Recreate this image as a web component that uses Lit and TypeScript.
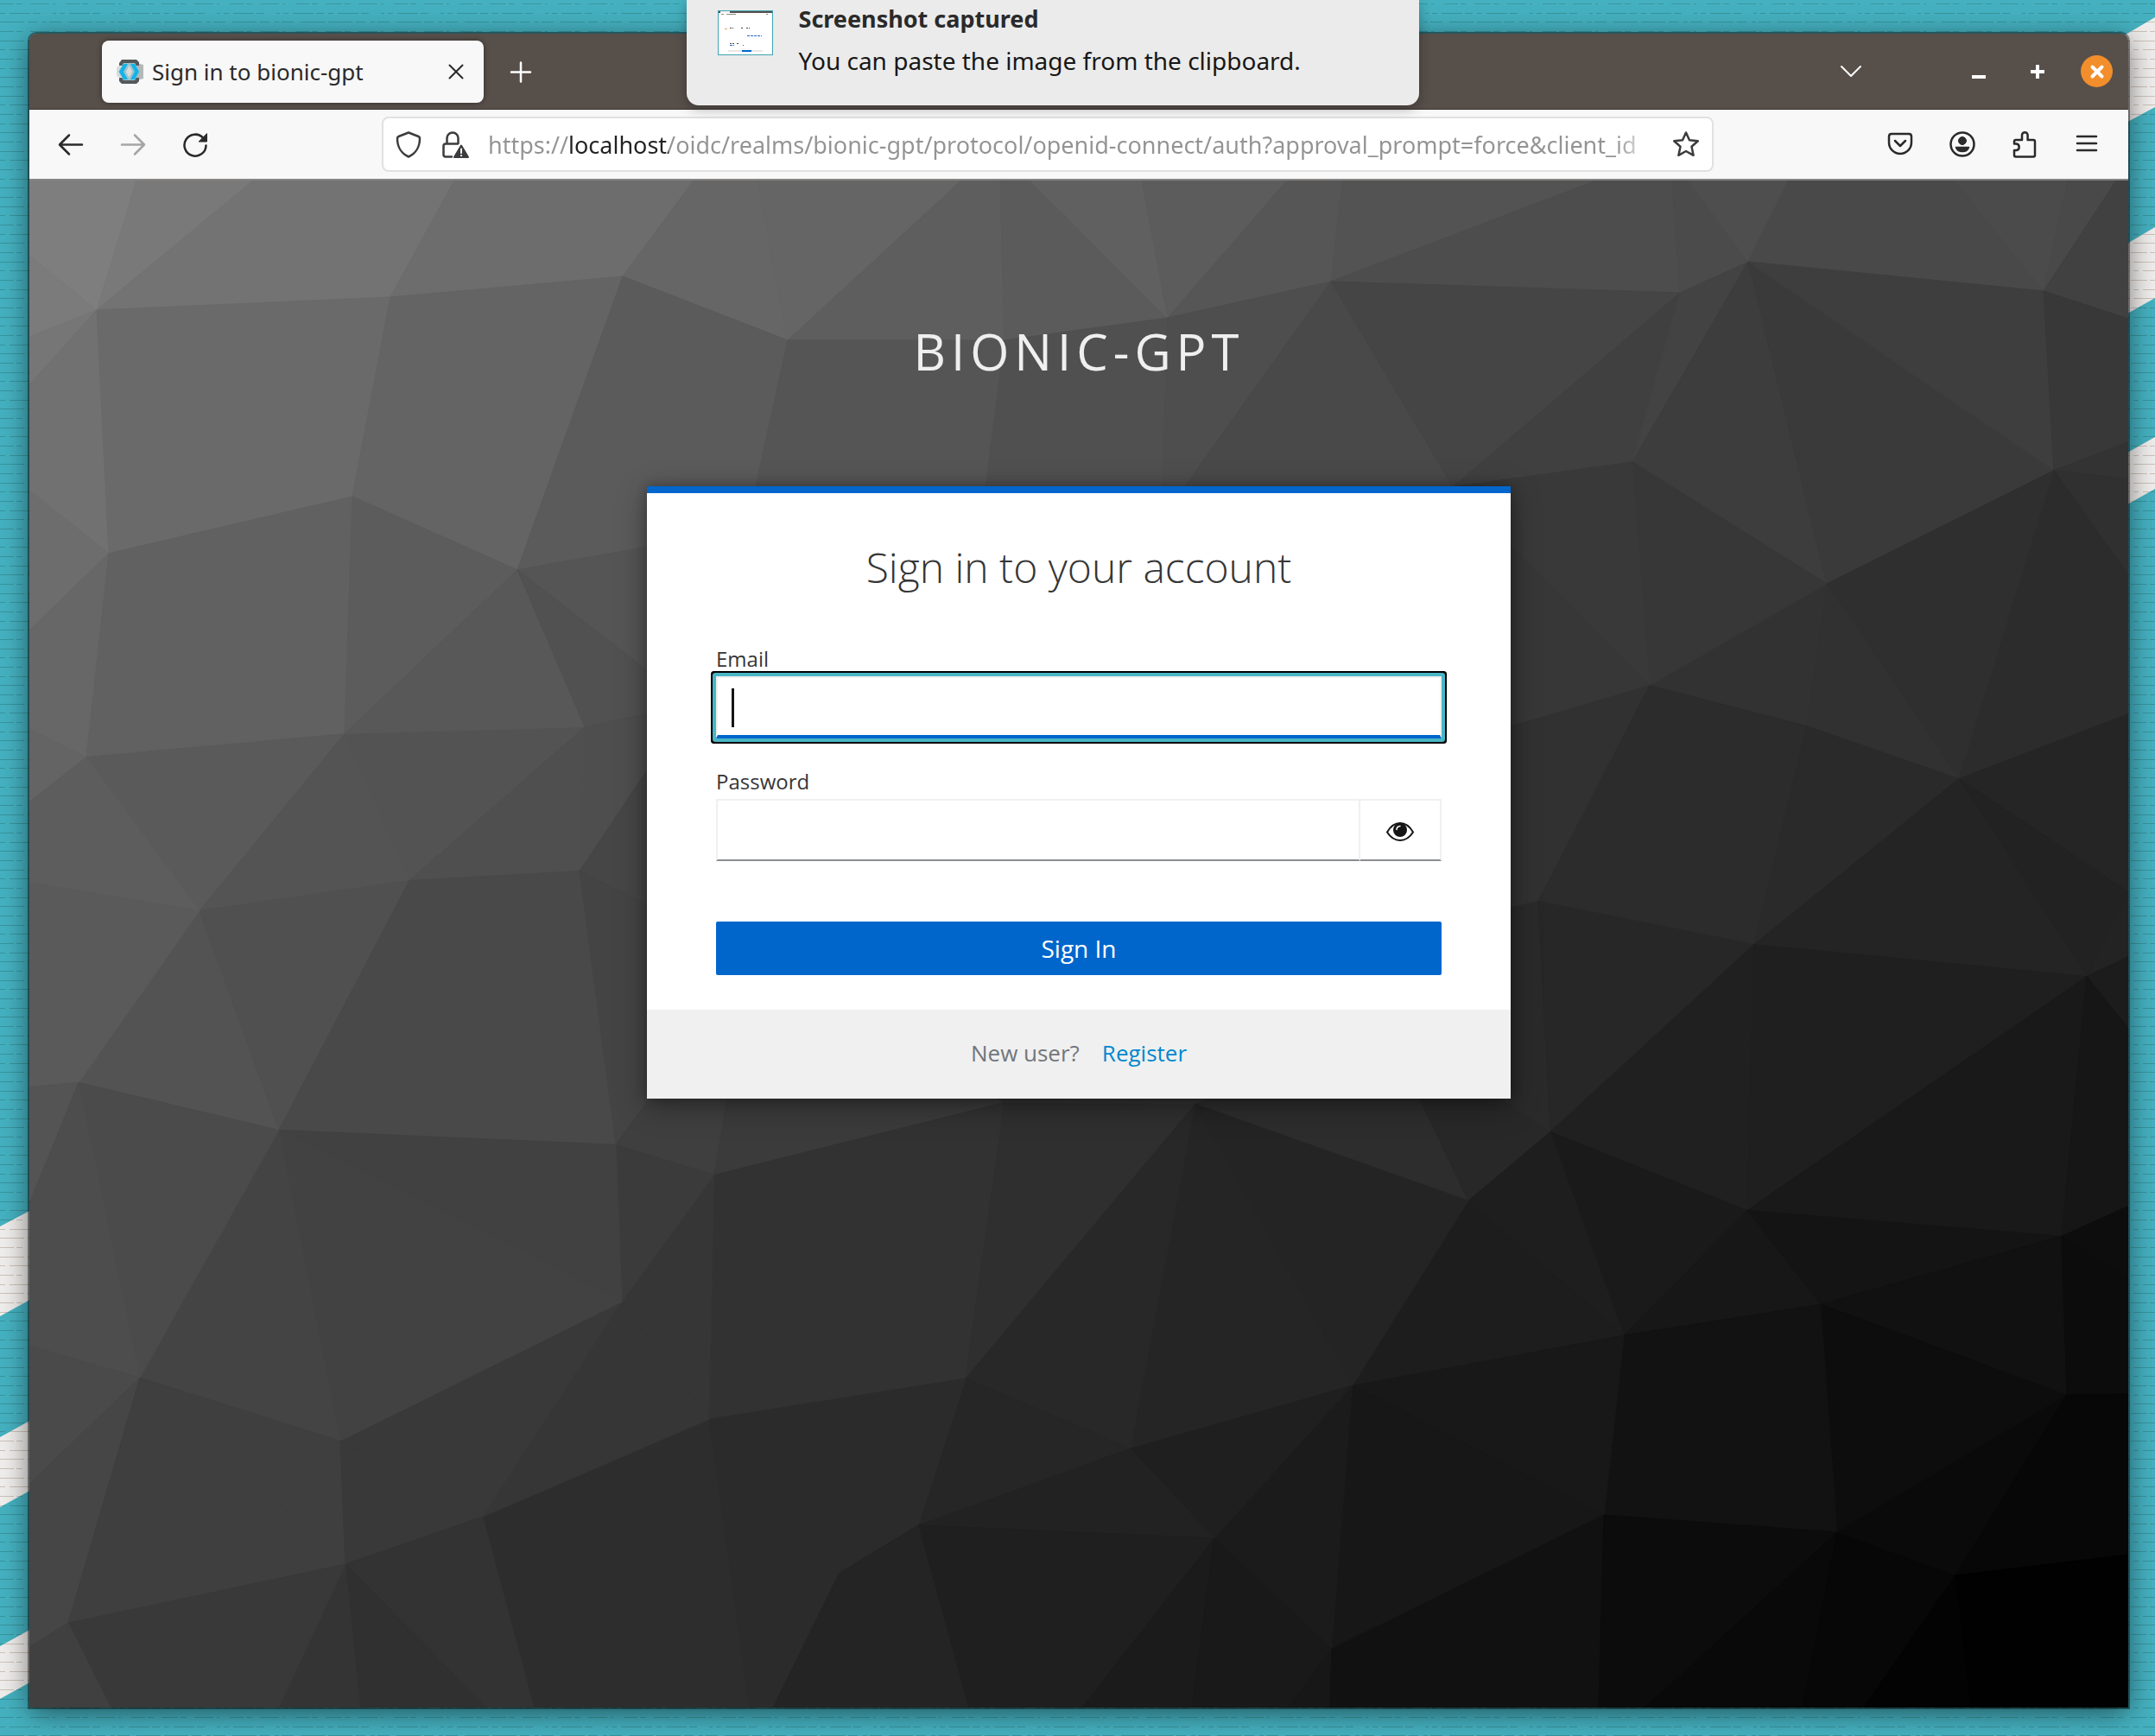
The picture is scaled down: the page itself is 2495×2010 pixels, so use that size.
import { LitElement, html, svg, css } from "lit";
import { customElement } from "lit/decorators.js";

type Point = [number, number];

/* Inner corners of the low-poly backdrop. */
const V: Record<string, Point> = {
  A: [112, 358], B: [452, 343], C: [721, 319], D: [912, 393], E: [1163, 393],
  F: [408, 574], G: [599, 659], H: [126, 640], I: [399, 849], J: [100, 876],
  K: [677, 841], L: [231, 1054], M: [474, 1019], N: [671, 1008],
  O: [1352, 367], P: [1541, 325], Q: [1945, 338], R: [2024, 302], S: [2366, 336],
  T: [1682, 563], U: [1890, 534], V: [2378, 544], W: [2115, 675], X: [1910, 793],
  Y: [2092, 840], Z: [2268, 901],
  AA: [1781, 1043], AB: [2031, 1093], AC: [2416, 1130], AD: [91, 1253],
  AE: [323, 1308], AF: [713, 1325], AG: [827, 1360], AH: [162, 1595],
  AI: [394, 1668], AJ: [720, 1507], AK: [821, 1643], AL: [1118, 1596],
  AM: [400, 1811], AN: [559, 1756], AO: [79, 1879], AP: [1063, 1766],
  AQ: [972, 1821], AR: [1384, 1278], AS: [1700, 1390], AT: [1795, 1310],
  AU: [2023, 1401], AV: [2387, 1431], AW: [1880, 1546], AX: [2108, 1510],
  AY: [1566, 1604], AZ: [1309, 1677], BA: [2393, 1615], BB: [1857, 1754],
  BC: [2127, 1774], BD: [1406, 1781], BE: [1542, 1909], BF: [2264, 1824],
  BG: [1163, 1276],
  C1: [864, 612], C2: [1130, 650], C3: [1345, 600], C4: [1700, 855],
  C5: [1700, 1062], C6: [800, 815], C7: [870, 1110], C8: [1600, 1180],
};

/* Each face: gray level, then corners. t/b/l/r + number is a point on that edge. */
const FACES = `
7e l208 t158 A l295|7b l295 A l389|76 l389 A l445|71 l445 A H l567|79 t158 t293 A
73 t293 t526 B A|6d t526 t803 C B|66 t803 t877 D C|65 t877 t1113 D|5e t1113 t1158 E D
5b t1158 t1193 O E|60 t1193 t1322 O|5c t1322 t1490 O|56 t1490 t1554 P O|53 t1554 t1848 P
4d t1848 t1936 Q P|4b t1936 t1954 R Q|4e t1954 t2071 R|49 t2071 t2263 S R|4b t2263 t2394 S
49 t2394 t2450 S|41 t2450 r208 r368 S|6a A B F H|64 B C G F|6d l567 H l729
67 l729 H J l843|64 l843 J l928|61 H F I J|5c F G I|5b C D C1 G|55 D E C2 C1
50 E O C3 C2|4e O P C3|49 P T C3|45 P Q T|40 Q U T|43 Q R U|3d R W U|3a R V W|3e R S V
38 S r368 r511 V|33 V r511 r554|30 V r554 r665|2c V r665 r826 Z|2f V Z W|31 W Z Y
32 W Y X|37 U W X|39 T U X|37 T X C4|31 X AA C5 C4|2c X Y AB AA|2a Y Z AB
25 Z r826 r1032|22 Z r1032 AC|24 Z AC AB|23 r1032 r1107 AC|5a J I L|5d l928 J L l1021
53 I K M|54 I M L|58 G K I|55 G C1 C6|51 G C6 K|4e K C6 N|4f K M N|46 N C6 C7
53 L AD AE|50 L M AE|5a l1021 L AD l1258|49 M N AF AE|44 N C7 AF|3f AF C7 AG
3b AG C7 BG|32 AG BG AL AK|2f BG AR AL|33 BG C7 C8 AR|2d AR C8 AS|28 AS C8 AT
2a AA C5 C8 AT|27 AA AB AT|20 AB AU AT|1f AB AC AU|19 AC AV AU|1c AC r1107 r1190
16 AC r1190 r1396 AV|1a AT AU AW|1e AS AT AW|1d AS AW AY|24 AR AS AY|25 AR AY AZ
28 AR AZ AL|17 AU AX AW|14 AU AV AX|11 AV BA AX|0d AV r1396 r1480|0c AV r1480 r1614 BA
0d AX BA BC|12 AW AX BC BB|18 AY AW BB|17 AY BB BE|1b AY BE BD|1f AY BD AZ|26 AL AZ AP
22 AP AZ BD|1f AP BD b1253 b1121|2b AK AL AP AQ b895 b867|24 AP AQ b895 b1121
2d AN AK b867 b618|36 AJ AK AN|39 AJ AN AI|36 AG AK AJ|3b AF AG AJ|41 AE AF AJ
42 AE AJ AI|44 AE AI AH|4b AD AE AH|54 l1258 AD l1393|4d AD AH l1558 l1393
4a AH l1558 l1718|46 l1718 AH AO l1907|3f AH AI AM|3f AH AM AO|39 AI AN AM
33 AM AN b618 b563|30 AM b563 b417|34 AM b417 b323|39 AO AM b323 b128|40 AO b128 l1977 l1907
1b BD b1253 b1380|19 BD BE b1492 b1380|17 BE b1492 b1540|11 BE BB b1851 b1540
0c BB BC b1905 b1851|09 BC b2087 b1905|07 BC BF b2158 b2087|0a BC BA BF
07 BA BF r1800 r1614|01 BF r1800 r1977 b2281|03 BF b2281 b2158`
  .trim()
  .split(/[|\n]/)
  .map((line) => {
    const [gray, ...names] = line.trim().split(" ");
    return { fill: `#${gray}${gray}${gray}`, points: names.map(corner).join(" ") };
  });

function corner(name: string): string {
  if (V[name]) return V[name].join(",");
  const n = Number(name.slice(1));
  switch (name[0]) {
    case "t": return `${n},208`;
    case "b": return `${n},1977`;
    case "l": return `34,${n}`;
    default: return `2464,${n}`;
  }
}

const polyBackdrop = html`
  <svg class="backdrop" viewBox="34 208 2430 1769" preserveAspectRatio="none" aria-hidden="true">
    ${FACES.map((f) => svg`<polygon points=${f.points} fill=${f.fill} stroke=${f.fill} stroke-width="1"></polygon>`)}
  </svg>`;

const wallpaper = html`
  <svg class="wallpaper" viewBox="0 0 2495 2010" preserveAspectRatio="none" aria-hidden="true">
    <defs>
      <pattern id="grain" width="190" height="64" patternUnits="userSpaceOnUse">
        <g fill="none" stroke="#2d7d80" stroke-opacity=".55">
          <path stroke-dasharray="16 3 7 9 22 4 3 12" d="M0 4.500H190M0 36.500H190" />
          <path stroke-dasharray="6 5 24 3 9 14 4 4" d="M0 15.500H190M0 57.500H190" />
          <path stroke-dasharray="28 4 11 6 5 3 14 8" d="M0 25.500H190M0 47.500H190" />
        </g>
      </pattern>
      <pattern id="grain-light" width="190" height="64" patternUnits="userSpaceOnUse">
        <g fill="none" stroke="#b3a596" stroke-opacity=".6">
          <path stroke-dasharray="16 3 7 9 22 4 3 12" d="M0 4.500H190M0 36.500H190" />
          <path stroke-dasharray="6 5 24 3 9 14 4 4" d="M0 15.500H190M0 57.500H190" />
          <path stroke-dasharray="28 4 11 6 5 3 14 8" d="M0 25.500H190M0 47.500H190" />
        </g>
      </pattern>
      <path id="stripes" d="M0 1420L40 1399V1502L0 1524ZM0 1664L40 1642V1723L0 1745ZM0 1906L40 1884V1945L0 1967ZM2456 43L2495 20V124L2456 145ZM2456 286L2495 263V345L2456 367ZM2456 528L2495 506V566L2456 588Z" />
    </defs>
    <rect width="2495" height="2010" fill="#45b1c0" />
    <rect width="2495" height="2010" fill="url(#grain)" />
    <use href="#stripes" fill="#f0eeec" />
    <use href="#stripes" fill="url(#grain-light)" />
  </svg>`;

const icon = (body: unknown, size = 32) => html`
  <svg class="icon" width=${size} height=${size} viewBox="0 0 32 32" fill="none" stroke="currentColor"
    stroke-width="2.500" stroke-linecap="round" stroke-linejoin="round" aria-hidden="true">${body}</svg>`;

const icons = {
  back: icon(svg`<path d="M29 16.500H3M14 5.500L3 16.500L14 27.500" />`),
  forward: icon(svg`<path d="M3 16.500H29M18 5.500L29 16.500L18 27.500" />`),
  reload: icon(svg`<path d="M28.500 17.500A12.500 12.500 0 1 1 25.500 9" /><path d="M29.500 4V13H20.500Z" fill="currentColor" stroke-width="1" />`),
  shield: icon(svg`<path d="M16 2.500L27.500 7Q29 7.600 29 9.500C29 18 25 26.500 16 30.500C7 26.500 3 18 3 9.500Q3 7.600 4.500 7Z" />`),
  lock: icon(svg`<path d="M12 30.500H5Q2.500 30.500 2.500 28V18Q2.500 15.500 5 15.500H19M6.500 15V9A6.500 6.500 0 0 1 19.500 9V15" />
    <path d="M23 17.500L31 31H15Z" fill="currentColor" stroke-width="2" /><path d="M23 21.500V26M23 29V29.200" stroke="#fff" stroke-width="2" />`),
  star: icon(svg`<path d="M16 2.500L20 11.300L29.800 12.300L22.500 18.800L24.600 28.800L16 24L7.400 28.800L9.500 18.800L2.200 12.300L12 11.300Z" />`),
  pocket: icon(svg`<path d="M6 4H26Q29 4 29 7V14A13 13 0 0 1 3 14V7Q3 4 6 4Z" /><path d="M10 12L16 18L22 12" />`),
  account: icon(svg`<circle cx="16" cy="16" r="13.500" /><circle cx="16" cy="12" r="4.500" fill="currentColor" stroke-width="1" />
    <path d="M8.500 19.500H23.500C22.500 23 19.500 24.500 16 24.500S9.500 23 8.500 19.500Z" fill="currentColor" stroke-width="1.500" />`),
  extension: icon(svg`<path d="M6 30.500Q4 30.500 4 28.500V23H6.500A3.800 3.800 0 0 0 6.500 15.500H4V13Q4 11 6 11H13V5.500A3.300 3.300 0 0 1 19.600 5.500V11H26Q28 11 28 13V28.500Q28 30.500 26 30.500Z" />`),
  menu: icon(svg`<path d="M5 7H27M5 15H27M5 23H27" />`),
  chevron: icon(svg`<path d="M5 10L16 21L27 10" stroke-width="2" />`),
  minimise: icon(svg`<path d="M8 22H24" stroke-width="4" stroke-linecap="butt" />`),
  maximise: icon(svg`<path d="M8 16H24M16 8V24" stroke-width="4" stroke-linecap="butt" />`),
  closeWindow: icon(svg`<path d="M10.500 10.500L21.500 21.500M21.500 10.500L10.500 21.500" stroke-width="4" />`),
  closeTab: icon(svg`<path d="M8.500 8.500L23.500 23.500M23.500 8.500L8.500 23.500" stroke-width="2" />`),
  newTab: icon(svg`<path d="M5 16.500H27M16 5.500V27.500" stroke-width="2.500" />`),
  favicon: html`<svg class="icon" width="32" height="30" viewBox="0 0 32 30" aria-hidden="true">
    <path d="M1 10L6 7V23L1 20Z" fill="#d9dbdd" />
    <path d="M24 5L32 7V23L24 25Z" fill="#b5b7b9" />
    <path d="M7 1H24L27 4V8H4V5ZM4 22H27V26L24 29H7L4 26Z" fill="#55585b" />
    <path d="M9 5H22L28 15L22 25H9L3 15Z" fill="#9fc4cf" />
    <path d="M9 6H14L9 15L14 24H9L4 15ZM22 6H17L22 15L17 24H22L27 15Z" fill="#12b4e8" />
    <path d="M15.500 8L19 15L15.500 22L12 15Z" fill="#dedad6" /></svg>`,
  eye: html`<svg class="icon" width="32" height="22" viewBox="0 0 32 22" aria-hidden="true">
    <path d="M1 11.500Q7 1 16 1T31 11.500Q25 21 16 21T1 11.500Z" fill="#fff" stroke="#151515" stroke-width="2" />
    <circle cx="16" cy="9" r="8" fill="#151515" />
    <path d="M12 8.500Q12.200 4.800 16 4.500" fill="none" stroke="#fff" stroke-width="1.500" stroke-linecap="round" /></svg>`,
};

const thumbnail = html`
  <svg class="thumb" width="64" height="52" viewBox="0 0 64 52" aria-hidden="true">
    <rect width="64" height="52" fill="#3fa3b1" />
    <rect x="1" y="1" width="62" height="50" fill="#fff" />
    <rect x="1" y="1" width="62" height="2" fill="#574f4a" />
    <rect x="3" y="1" width="11" height="2" fill="#f3f3f3" />
    <path d="M4 4.500H7M10 4.500H21M56 4.500H58" stroke="#8a8a8a" />
    <path d="M8 21.500H11" stroke="#f0a050" />
    <path d="M14 20.500H18M27 20.500H29M33 20.500H37M14 38.500H20M22 38.500H25" stroke="#444" stroke-dasharray="2 1" />
    <path d="M34 29.500H51M14 40.500H19M29 40.500H30" stroke="#2467c8" stroke-dasharray="3 1" />
    <rect x="12" y="46" width="40" height="2" fill="#e6e6ea" />
    <rect x="28" y="46" width="11" height="2" fill="#06c" />
  </svg>`;

@customElement("browser-chrome")
class BrowserChrome extends LitElement {
  static styles = css`
    :host { display: block; font-family: "Noto Sans", "Open Sans", sans-serif; color: #2b2a2b; }
    button { border: 0; padding: 0; margin: 0; background: none; color: inherit; font: inherit; cursor: pointer;
      display: inline-flex; align-items: center; justify-content: center; }
    .icon { display: block; flex: none; }
    .titlebar { display: flex; align-items: center; height: 88px; box-sizing: border-box; padding: 0 18px 0 84px;
      background: #574f4a; border-bottom: 1px solid #37302d; border-radius: 8px 8px 0 0; color: #fff; }
    .tab { display: flex; align-items: center; gap: 10px; width: 442px; height: 72px; box-sizing: border-box;
      padding: 0 16px; border-radius: 8px; background: #f8f8f8; color: #2b2a2b; box-shadow: 0 0 6px rgba(0, 0, 0, .45); }
    .tab-title { flex: 1; font-size: 26px; line-height: 36px; white-space: nowrap; }
    .new-tab { width: 64px; height: 64px; margin-left: 11px; }
    .window-controls { display: flex; align-items: center; margin-left: auto; }
    .list-tabs { width: 64px; height: 64px; margin-right: 82px; }
    .window-button { width: 68px; height: 64px; }
    .window-close { width: 37px; height: 37px; margin-left: 16px; border-radius: 50%; background: #f28e2b; }
    .toolbar { display: flex; align-items: center; height: 82px; box-sizing: border-box; padding: 0 12px;
      background: #f8f8f8; border-bottom: 2px solid #878583; }
    .group { display: flex; }
    .tool { width: 72px; height: 64px; }
    .tool:disabled { color: #a6a5a6; cursor: default; }
    .space { flex: 1 1 0; max-width: 180px; }
    .urlbar { display: flex; align-items: center; flex: 1 1 1180px; height: 64px; box-sizing: border-box; padding: 0 14px 0 13px;
      gap: 22px; background: #fff; border: 2px solid #e1e1e1; border-radius: 8px; color: #3c3b3d; }
    .address { flex: 1; min-width: 0; height: 56px; box-sizing: border-box; border: 0; padding: 0; margin: 0;
      outline: 0; font: 27px/36px "Noto Sans", "Open Sans", sans-serif; color: transparent; -webkit-text-fill-color: transparent;
      background: linear-gradient(90deg, #949394 0 95px, #232223 95px 209px, #949394 209px calc(100% - 52px), transparent calc(100% - 8px));
      -webkit-background-clip: text; background-clip: text; }
    .bookmark { margin-left: -8px; }
  `;
  render() {
    return html`
      <header class="titlebar">
        <div class="tab">
          ${icons.favicon}
          <span class="tab-title">Sign in to bionic-gpt</span>
          <button type="button" aria-label="Close tab">${icons.closeTab}</button>
        </div>
        <button class="new-tab" type="button" aria-label="New tab">${icons.newTab}</button>
        <div class="window-controls">
          <button class="list-tabs" type="button" aria-label="List all tabs">${icons.chevron}</button>
          <button class="window-button" type="button" aria-label="Minimise">${icons.minimise}</button>
          <button class="window-button" type="button" aria-label="Maximise">${icons.maximise}</button>
          <button class="window-close" type="button" aria-label="Close window">${icons.closeWindow}</button>
        </div>
      </header>
      <nav class="toolbar">
        <div class="group">
          <button class="tool" type="button" aria-label="Back">${icons.back}</button>
          <button class="tool" type="button" aria-label="Forward" disabled>${icons.forward}</button>
          <button class="tool" type="button" aria-label="Reload">${icons.reload}</button>
        </div>
        <div class="space"></div>
        <div class="urlbar">
          <button type="button" aria-label="Tracking protection">${icons.shield}</button>
          <button type="button" aria-label="Connection not secure">${icons.lock}</button>
          <input class="address" type="text" aria-label="Address" spellcheck="false"
            value="https://localhost/oidc/realms/bionic-gpt/protocol/openid-connect/auth?approval_prompt=force&client_id" />
          <button class="bookmark" type="button" aria-label="Bookmark this page">${icons.star}</button>
        </div>
        <div class="space"></div>
        <div class="group">
          <button class="tool" type="button" aria-label="Save to Pocket">${icons.pocket}</button>
          <button class="tool" type="button" aria-label="Account">${icons.account}</button>
          <button class="tool" type="button" aria-label="Extensions">${icons.extension}</button>
          <button class="tool" type="button" aria-label="Menu">${icons.menu}</button>
        </div>
      </nav>`;
  }
}

@customElement("login-page")
class LoginPage extends LitElement {
  static styles = css`
    :host { position: relative; display: flex; flex-direction: column; align-items: center; flex: 1; overflow: hidden;
      font-family: "Open Sans", sans-serif; color: #363636; background: #333; }
    .backdrop { position: absolute; inset: 0; width: 100%; height: 100%; }
    .realm { position: relative; margin: 154px 0 0; font-size: 58px; line-height: 88px; font-weight: 400;
      letter-spacing: 6px; color: #efefef; text-transform: uppercase; }
    .card { position: relative; width: min(1000px, 100%); margin: 112px 0 40px; background: #fff; border-top: 8px solid #06c;
      box-sizing: border-box; box-shadow: 0 8px 32px rgba(3, 3, 3, .36), 0 0 12px rgba(3, 3, 3, .24); }
    .form { padding: 46px 80px 40px; }
    .heading { margin: 0 0 48px; text-align: center; font-size: 48px; line-height: 80px; font-weight: 300; }
    .label { display: block; margin-bottom: 2px; font-size: 24px; line-height: 36px; }
    .field { position: relative; display: flex; margin-bottom: 32px; }
    .text { flex: 1; min-width: 0; height: 72px; box-sizing: border-box; margin: 0; padding: 0 16px; border: 2px solid #f0f0f0;
      border-bottom-color: #8a8d90; border-radius: 0; outline: 0; background: #fff; font: 28px/36px "Open Sans", sans-serif; color: #151515; }
    .active { border-bottom: 4px solid #06c; caret-color: transparent; border-radius: 1px;
      box-shadow: 0 0 0 4px #48b6c5, 0 0 0 6px #000; }
    .caret { position: absolute; left: 18px; top: 14px; width: 3px; height: 45px; background: #151515; }
    .password { margin-bottom: 70px; }
    .reveal { width: 94px; height: 72px; box-sizing: border-box; margin: 0; padding: 4px 0 0; display: flex; align-items: center;
      justify-content: center; border: solid #f0f0f0; border-width: 2px 2px 2px 0; border-bottom-color: #8a8d90; background: #fff; cursor: pointer; }
    .submit { display: block; width: 100%; height: 62px; border: 0; border-radius: 2px; padding: 0; background: #06c; color: #fff;
      font: 28px/36px "Open Sans", sans-serif; cursor: pointer; }
    .footer { display: flex; justify-content: center; gap: 26px; padding: 32px 80px 35px; background: #f0f0f0; font-size: 26px;
      line-height: 36px; color: #72767b; }
    .register { color: #0088ce; text-decoration: none; }
  `;
  render() {
    return html`
      ${polyBackdrop}
      <h1 class="realm">bionic-gpt</h1>
      <main class="card">
        <form class="form" @submit=${(e: Event) => e.preventDefault()}>
          <h2 class="heading">Sign in to your account</h2>
          <label class="label" for="email">Email</label>
          <div class="field">
            <input class="text active" id="email" type="text" autocomplete="off" />
            <span class="caret"></span>
          </div>
          <label class="label" for="password">Password</label>
          <div class="field password">
            <input class="text" id="password" type="password" autocomplete="off" />
            <button class="reveal" type="button" aria-label="Show password">${icons.eye}</button>
          </div>
          <button class="submit" type="submit">Sign In</button>
        </form>
        <div class="footer"><span>New user?</span><a class="register" href="#register">Register</a></div>
      </main>`;
  }
}

@customElement("app-root")
class AppRoot extends LitElement {
  static styles = css`
    :host { position: relative; display: flex; flex-direction: column; box-sizing: border-box; min-height: 100vh;
      padding: 39px 31px 33px 34px; overflow: hidden; background: #45b1c0; }
    .wallpaper { position: absolute; inset: 0; width: 100%; height: 100%; }
    .window { position: relative; display: flex; flex-direction: column; flex: 1; border-radius: 8px 8px 0 0;
      box-shadow: 0 0 0 2px rgba(0, 0, 0, .4), 0 6px 32px rgba(0, 0, 0, .55); }
    .notification { position: absolute; top: 0; left: calc(50% - 453px); display: flex; align-items: flex-start; gap: 30px;
      width: 848px; height: 122px; box-sizing: border-box; padding: 0 36px; border-radius: 0 0 14px 14px; background: #ebebeb;
      box-shadow: 0 4px 14px rgba(0, 0, 0, .3); font-family: "Noto Sans", "Open Sans", sans-serif; font-size: 28px; line-height: 48px; color: #171717; }
    .thumb { display: block; flex: none; margin-top: 12px; }
    .message { margin: 0; }
    .title { margin-bottom: 2px; font-size: 27px; line-height: 44px; color: #2a2a2a; }
  `;
  render() {
    return html`
      ${wallpaper}
      <div class="window">
        <browser-chrome></browser-chrome>
        <login-page></login-page>
      </div>
      <aside class="notification" role="status">
        ${thumbnail}
        <div>
          <p class="message title"><b>Screenshot captured</b></p>
          <p class="message">You can paste the image from the clipboard.</p>
        </div>
      </aside>`;
  }
}
